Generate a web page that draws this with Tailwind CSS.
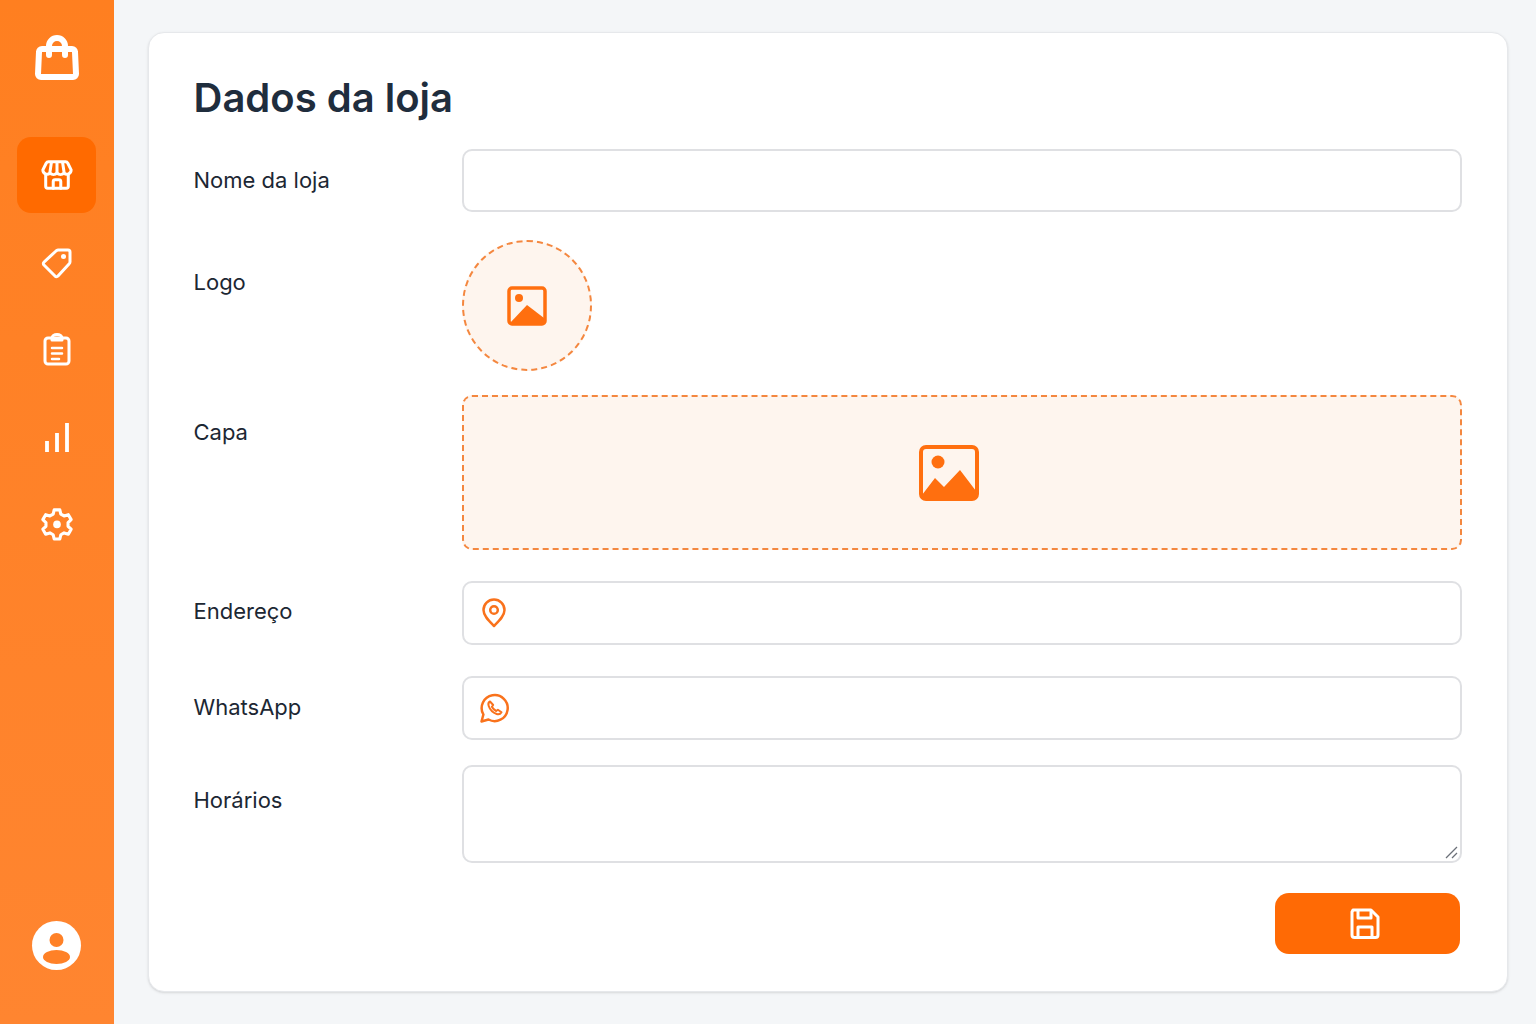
<!DOCTYPE html>
<html lang="pt-BR">
<head>
    <meta charset="UTF-8">
    <title>Dados da loja</title>
    <script src="https://cdn.jsdelivr.net/npm/@tailwindcss/browser@4"></script>
</head>
<body class="flex h-screen overflow-hidden bg-[#f4f6f8] font-['Inter',sans-serif]">
    <!-- Sidebar -->
    <aside class="flex flex-col items-center w-[114px] h-[1024px] pr-[1px] bg-gradient-to-b from-[#ff7f20] to-[#ff8530] text-white">
        <div class="mt-[32px] h-[52px] flex items-center justify-center">
            <svg class="w-[52px] h-[52px]" viewBox="0 0 52 52" fill="none" stroke="currentColor" stroke-width="6" stroke-linecap="round" stroke-linejoin="round">
                <path d="M11 17h30a3 3 0 0 1 3 3l1 22a3 3 0 0 1-3 3H10a3 3 0 0 1-3-3l1-22a3 3 0 0 1 3-3z"/>
                <path d="M18 23v-9a8 8 0 0 1 16 0v9"/>
            </svg>
        </div>
        <a href="#" class="mt-[53px] w-[79px] h-[76px] rounded-[14px] bg-[#ff6a00] flex items-center justify-center">
            <svg class="w-[32px] h-[32px]" viewBox="0 0 34 34" fill="none" stroke="currentColor" stroke-width="3.200" stroke-linejoin="round" stroke-linecap="round">
                <path d="M8 3h18a3 3 0 0 1 2.500 1.500L32 11.500a4.500 4.500 0 0 1-7.500 3.500 5.500 5.500 0 0 1-7.500 0 5.500 5.500 0 0 1-7.500 0A4.500 4.500 0 0 1 2 11.500L5.500 4.500A3 3 0 0 1 8 3z"/>
                <path d="M11 4l-1.500 10M23 4l1.500 10M17 4v10"/>
                <path d="M5 17v12a2 2 0 0 0 2 2h20a2 2 0 0 0 2-2V17"/>
                <path d="M13 31v-7a2 2 0 0 1 2-2h4a2 2 0 0 1 2 2v7"/>
            </svg>
        </a>
        <a href="#" class="mt-[33px] h-[34px] flex items-center justify-center">
            <svg class="w-[34px] h-[34px]" viewBox="0 0 34 34" fill="none" stroke="currentColor" stroke-width="3" stroke-linejoin="round">
                <path d="M18 4h10a2 2 0 0 1 2 2v10a3 3 0 0 1-1 2L18 30a2 2 0 0 1-3 0L4 19a2 2 0 0 1 0-3L16 5a3 3 0 0 1 2-1z"/>
                <circle cx="23.500" cy="10.500" r="2.500" fill="currentColor" stroke="none"/>
            </svg>
        </a>
        <a href="#" class="mt-[53px] h-[34px] flex items-center justify-center">
            <svg class="w-[34px] h-[34px]" viewBox="0 0 34 34" fill="none" stroke="currentColor" stroke-width="3" stroke-linejoin="round" stroke-linecap="round">
                <rect x="5" y="5" width="24" height="26" rx="3"/>
                <path d="M12 5a5 3.500 0 0 1 10 0v2H12z"/>
                <path d="M12 15h10M12 20.500h10M12 26h7" stroke-width="2.500"/>
            </svg>
        </a>
        <a href="#" class="mt-[53px] h-[34px] flex items-center justify-center">
            <svg class="w-[34px] h-[34px]" viewBox="0 0 34 34" fill="none" stroke="currentColor" stroke-width="3.800">
                <path d="M7 32V21M17 32V13M27 32V3"/>
            </svg>
        </a>
        <a href="#" class="mt-[53px] h-[34px] flex items-center justify-center">
            <svg class="w-[34px] h-[34px]" viewBox="0 0 24 24" fill="none" stroke="currentColor" stroke-width="2.200" stroke-linejoin="round">
                <path d="M10 2h4l.7 3 2.300 1.300 3-.9 2 3.500-2.200 2.100v2.600L22 15.700l-2 3.500-3-.9-2.300 1.300-.7 3h-4l-.7-3L7 18.300l-3 .9-2-3.500 2.200-2.100v-2.600L2 8.900l2-3.500 3 .9 2.300-1.300z"/>
                <circle cx="12" cy="12.300" r="2.700" fill="currentColor" stroke="none"/>
            </svg>
        </a>
        <div class="mt-auto mb-[54px] w-[49px] h-[49px] rounded-full bg-white">
            <svg class="w-[49px] h-[49px]" viewBox="0 0 49 49">
                <circle cx="24.500" cy="19" r="7" fill="#ff8127"/>
                <ellipse cx="24.500" cy="36" rx="13.500" ry="7" fill="#ff8127"/>
            </svg>
        </div>
    </aside>

    <!-- Main Content -->
    <main class="flex-1 pt-[32px] pl-[34px] pr-[28px]">
        <div class="h-[960px] bg-white rounded-[16px] border border-[#e6e8eb] shadow-sm pl-[44.500px] pr-[45.500px] pt-[37px] text-[#1c2733]">
            <h1 class="text-[40px] leading-[56px] font-semibold text-[#1f2d3d]">Dados da loja</h1>

            <div class="mt-[23px] flex">
                <label class="w-[268.500px] shrink-0 text-[22px] leading-[63px]">Nome da loja</label>
                <input type="text" class="flex-1 h-[63px] rounded-[10px] border-2 border-[#dfe0e3] bg-white">
            </div>

            <div class="mt-[28px] flex">
                <label class="w-[268.500px] shrink-0 text-[22px] leading-[32px] pt-[26px]">Logo</label>
                <div class="w-[130px] h-[131px] rounded-full border-2 border-dashed border-[#f4873f] bg-[#fef5ee] flex items-center justify-center">
                    <svg class="w-[40px] h-[40px]" viewBox="0 0 40 40">
                        <rect x="2" y="2" width="36" height="36" rx="3" fill="none" stroke="#ff6f0f" stroke-width="3.500"/>
                        <circle cx="12" cy="12" r="4" fill="#ff6f0f"/>
                        <path d="M3 37 L20 19 L37 32 V37 Z" fill="#ff6f0f"/>
                    </svg>
                </div>
            </div>

            <div class="mt-[24px] flex">
                <label class="w-[268.500px] shrink-0 text-[22px] leading-[32px] pt-[21px]">Capa</label>
                <div class="flex-1 h-[155px] pr-[26px] rounded-[10px] border-2 border-dashed border-[#f4873f] bg-[#fef5ee] flex items-center justify-center">
                    <svg class="w-[60px] h-[56px]" viewBox="0 0 60 56">
                        <rect x="2" y="2" width="56" height="52" rx="5" fill="none" stroke="#ff6f0f" stroke-width="4"/>
                        <circle cx="19" cy="17" r="6.500" fill="#ff6f0f"/>
                        <path d="M3 50 L16 33 L25 42 L41 25 L57 46 V50 Q57 54 53 54 H7 Q3 54 3 50 Z" fill="#ff6f0f"/>
                    </svg>
                </div>
            </div>

            <div class="mt-[31px] flex">
                <label class="w-[268.500px] shrink-0 text-[22px] leading-[61px]">Endereço</label>
                <div class="flex-1 h-[64px] rounded-[10px] border-2 border-[#dfe0e3] flex items-center pl-[17px]">
                    <svg class="w-[26px] h-[30px]" viewBox="0 0 26 30" fill="none" stroke="#f9721c" stroke-width="2.500">
                        <path d="M13 28C8 23 2.500 18 2.500 12a10.500 10.500 0 0 1 21 0c0 6-5.500 11-10.500 16z" stroke-linejoin="round"/>
                        <circle cx="13" cy="12" r="3.800"/>
                    </svg>
                </div>
            </div>

            <div class="mt-[31px] flex">
                <label class="w-[268.500px] shrink-0 text-[22px] leading-[63px]">WhatsApp</label>
                <div class="flex-1 h-[64px] rounded-[10px] border-2 border-[#dfe0e3] flex items-center pl-[15px]">
                    <svg class="w-[32px] h-[32px]" viewBox="0 0 32 32" fill="none" stroke="#f9721c" stroke-width="2.500" stroke-linejoin="round">
                        <path d="M2.500 29.500l1.900-7A13 13 0 1 1 9.500 27.500z"/>
                        <path d="M11 9.500c-1.500.8-2 2.500-1.300 4.500 1.200 3.500 4.500 6.800 8 8 2.100.7 3.800 0 4.800-1.700l-3.600-2.600-1.700 1.300c-1.800-.9-3.400-2.500-4.300-4.300l1.300-1.700z" stroke-width="2"/>
                    </svg>
                </div>
            </div>

            <div class="mt-[25px] flex">
                <label class="w-[268.500px] shrink-0 text-[22px] leading-[32px] pt-[19px]">Horários</label>
                <div class="relative flex-1 h-[98px]">
                    <textarea class="w-full h-full resize-none rounded-[10px] border-2 border-[#dfe0e3] block"></textarea>
                    <svg class="absolute right-[4px] bottom-[4px] w-[13px] h-[13px] pointer-events-none" viewBox="0 0 13 13" fill="none" stroke="#6b7078" stroke-width="1.300">
                        <path d="M1 12L12 1M7 12l5-5"/>
                    </svg>
                </div>
            </div>

            <div class="mt-[30px] flex justify-end">
                <button class="w-[185px] h-[61px] mr-[2px] rounded-[14px] bg-[#ff6a05] text-white flex items-center justify-center pr-[4px]">
                    <svg class="w-[32px] h-[32px]" viewBox="0 0 32 32" fill="none" stroke="currentColor" stroke-width="3" stroke-linejoin="round">
                        <path d="M4 2h18l7 7v18a2.500 2.500 0 0 1-2.500 2.500h-21A2.500 2.500 0 0 1 3 27V4z"/>
                        <path d="M9 3v7h13V3M9 29v-10h14v10"/>
                    </svg>
                </button>
            </div>
        </div>
    </main>
</body>
</html>
